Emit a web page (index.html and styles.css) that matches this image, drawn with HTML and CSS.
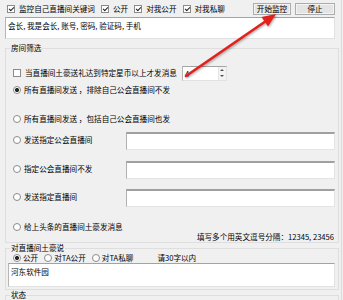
FILE: index.html
```html
<!DOCTYPE html>
<html lang="zh-CN">
<head>
    <meta charset="UTF-8">
    <title>直播间监控</title>
    <link rel="stylesheet" href="styles.css">
</head>
<body>
<div class="form">
    <div class="toolbar">
        <label class="chk"><span class="box on"></span>监控自己直播间关键词</label>
        <label class="chk"><span class="box on"></span>公开</label>
        <label class="chk"><span class="box on"></span>对我公开</label>
        <label class="chk"><span class="box on"></span>对我私聊</label>
        <span class="btns">
            <button class="btn btn-start">开始监控</button>
            <button class="btn btn-stop">停止</button>
        </span>
    </div>
    <div class="memo">会长, 我是会长, 账号, 密码, 验证码, 手机</div>

    <fieldset class="group rooms">
        <legend>房间筛选</legend>
        <div class="row row-chk">
            <label class="chk"><span class="box"></span>当直播间土豪送礼达到特定星币以上才发消息</label>
            <span class="spin">
                <span class="spin-val">4</span>
                <span class="spin-btns"><i class="up"></i><i class="down"></i></span>
            </span>
        </div>
        <div class="row row-r1"><span class="rad on"></span>所有直播间发送 ，排除自己公会直播间不发</div>
        <div class="row row-r2"><span class="rad"></span>所有直播间发送 ，包括自己公会直播间也发</div>
        <div class="row row-in row-r3"><span class="opt"><span class="rad"></span>发送指定公会直播间</span><span class="field"></span></div>
        <div class="row row-in row-r4"><span class="opt"><span class="rad"></span>指定公会直播间不发</span><span class="field"></span></div>
        <div class="row row-in row-r5"><span class="opt"><span class="rad"></span>发送指定直播间</span><span class="field"></span></div>
        <div class="row row-r6"><span class="rad"></span>给上头条的直播间土豪发消息</div>
        <div class="hint">填写多个用英文逗号分隔：12345, 23456</div>
    </fieldset>

    <fieldset class="group say">
        <legend>对直播间土豪说</legend>
        <div class="row row-say">
            <span class="opt"><span class="rad on"></span>公开</span>
            <span class="opt"><span class="rad"></span>对TA公开</span>
            <span class="opt"><span class="rad"></span>对TA私聊</span>
            <span class="limit">请30字以内</span>
        </div>
        <div class="memo memo-say">河东软件园</div>
    </fieldset>

    <fieldset class="group state">
        <legend>状态</legend>
    </fieldset>

    <svg class="arrow" width="343" height="300" viewBox="0 0 343 300">
        <line x1="186" y1="76" x2="266" y2="21" stroke="#e3211c" stroke-width="2.6" stroke-linecap="round"/>
        <polygon points="276,14 268,26.5 261.5,17" fill="#e3211c"/>
    </svg>
</div>
</body>
</html>
```

FILE: styles.css
```css
html, body {
    margin: 0;
    width: 343px;
    height: 300px;
    overflow: hidden;
}

body {
    background-color: #f0f0f0;
    font-family: "Noto Sans CJK SC", "Noto Sans", sans-serif;
    font-size: 7.6px;
    line-height: 10px;
    color: #000;
}

.form {
    position: relative;
    width: 341px;
    height: 300px;
    border-right: 1px solid #dadada;
}

/* top bar */
.toolbar {
    display: flex;
    align-items: center;
    height: 17px;
    padding: 0 6px 0 7px;
}

.chk {
    display: flex;
    align-items: center;
    margin-right: 6px;
    white-space: nowrap;
}

.box {
    position: relative;
    width: 8px;
    height: 8px;
    margin-right: 4px;
    box-sizing: border-box;
    border: 1px solid #8b8b8b;
    background-color: #fff;
    flex: none;
}

.box.on::after {
    content: '';
    position: absolute;
    left: 2px;
    top: 0;
    width: 2px;
    height: 4px;
    border: solid #222;
    border-width: 0 1px 1px 0;
    transform: rotate(45deg);
}

.btns {
    display: flex;
    margin-left: auto;
}

.btn {
    height: 12px;
    padding: 0;
    margin: 1px 0 0 4px;
    font-family: inherit;
    font-size: 7.6px;
    line-height: 10px;
    color: #000;
    border: 1px solid #acacac;
    background-color: #e4e4e4;
    box-shadow: inset 0 0 0 1px #f4f4f4;
}

.btn-start { width: 38px; }
.btn-stop { width: 40px; }

.memo {
    height: 22px;
    margin: 0 6px 0 5px;
    padding: 3px 2px;
    box-sizing: border-box;
    background-color: #fff;
    border: 1px solid #e2e2e2;
    border-top-color: #a3a3a3;
    border-left-color: #b5b5b5;
}

/* group boxes */
.group {
    margin: 0 2px 0 5px;
    padding: 0 3px 0 7px;
    border: 1px solid #dedede;
    min-width: 0;
}

.group legend {
    padding: 0 1px;
    margin-left: -3px;
    line-height: 10px;
}

.rooms {
    margin-top: 4px;
    padding-top: 12px;
}

.row {
    display: flex;
    align-items: center;
    white-space: nowrap;
}

.rad {
    width: 8px;
    height: 8px;
    margin-right: 3px;
    box-sizing: border-box;
    border: 1px solid #8b8b8b;
    border-radius: 50%;
    background-color: #fff;
    flex: none;
}

.rad.on {
    background: radial-gradient(circle, #262626 0 1.8px, #fff 2.3px);
}

.opt {
    display: flex;
    align-items: center;
}

.row-chk { height: 16px; }
.row-chk .chk { margin-right: 5px; }

.spin {
    display: flex;
    width: 45px;
    height: 15px;
    box-sizing: border-box;
    background-color: #fff;
    border: 1px solid #e2e2e2;
    border-top-color: #a3a3a3;
    border-left-color: #b5b5b5;
}

.spin-val {
    flex: 1;
    padding-left: 2px;
    line-height: 13px;
}

.spin-btns {
    display: flex;
    flex-direction: column;
    width: 7px;
    border-left: 1px solid #e6e6e6;
    background-color: #f3f3f3;
}

.spin-btns i {
    flex: 1;
    display: flex;
    align-items: center;
    justify-content: center;
}

.spin-btns i::after {
    content: '';
    border-left: 2px solid transparent;
    border-right: 2px solid transparent;
}

.spin-btns .up::after { border-bottom: 2px solid #555; }
.spin-btns .down::after { border-top: 2px solid #555; }

.row-r1 { height: 14px; margin-top: 2px; }
.row-r2 { height: 14px; margin-top: 15px; }

.row-in { height: 18px; }
.row-in .opt { margin-bottom: 3px; }
.row-r3 { margin-top: 6px; }
.row-r4 { margin-top: 11px; }
.row-r5 { margin-top: 10px; }

.field {
    width: 209px;
    height: 18px;
    margin-left: auto;
    box-sizing: border-box;
    background-color: #fff;
    border: 1px solid #e4e4e4;
    border-top: 2px solid #a0a0a0;
    border-left-color: #b0b0b0;
}

.row-r6 { height: 12px; margin-top: 14px; }

.hint {
    height: 10px;
    margin-top: -1px;
    padding-right: 1px;
    text-align: right;
    white-space: nowrap;
}

.say .row-say {
    height: 10px;
}

.row-say .rad { margin-right: 2px; }
.row-say .opt { margin-right: 6px; }
.row-say .limit { margin-left: 18px; }

.memo-say {
    height: 24px;
    margin: 0 0 2px -5px;
}

.state {
    height: 20px;
}

.arrow {
    position: absolute;
    left: 0;
    top: 0;
    pointer-events: none;
    filter: drop-shadow(1px 1px 1px rgba(0, 0, 0, 0.35));
}
```
